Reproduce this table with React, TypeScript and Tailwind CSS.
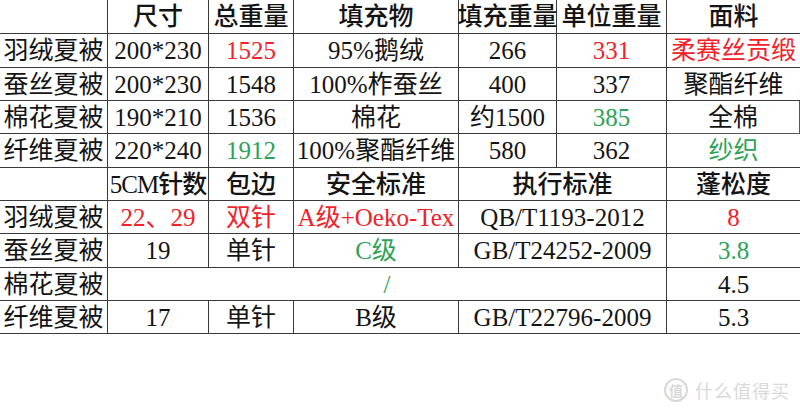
import React from "react";

type Cell = {
  text: string;
  color?: "red" | "green";
  bold?: boolean;
  span?: string;
  last?: boolean;
  extra?: string;
};

const colorClass = (c?: "red" | "green") =>
  c === "red" ? "text-[#f0222a]" : c === "green" ? "text-[#2ea356]" : "text-[#141414]";

const sizeRows: Cell[][] = [
  [
    { text: "" },
    { text: "尺寸", bold: true },
    { text: "总重量", bold: true },
    { text: "填充物", bold: true },
    { text: "填充重量", bold: true },
    { text: "单位重量", bold: true },
    { text: "面料", bold: true, last: true },
  ],
  [
    { text: "羽绒夏被" },
    { text: "200*230" },
    { text: "1525", color: "red" },
    { text: "95%鹅绒" },
    { text: "266" },
    { text: "331", color: "red" },
    { text: "柔赛丝贡缎", color: "red", last: true },
  ],
  [
    { text: "蚕丝夏被" },
    { text: "200*230" },
    { text: "1548" },
    { text: "100%柞蚕丝" },
    { text: "400" },
    { text: "337" },
    { text: "聚酯纤维", last: true },
  ],
  [
    { text: "棉花夏被" },
    { text: "190*210" },
    { text: "1536" },
    { text: "棉花" },
    { text: "约1500" },
    { text: "385", color: "green" },
    { text: "全棉", last: true, extra: "border-r border-[#555]" },
  ],
  [
    { text: "纤维夏被" },
    { text: "220*240" },
    { text: "1912", color: "green" },
    { text: "100%聚酯纤维" },
    { text: "580" },
    { text: "362" },
    { text: "纱织", color: "green", last: true },
  ],
];

const specRows: Cell[][] = [
  [
    { text: "" },
    { text: "5CM针数", bold: true, extra: "tracking-[-1px]" },
    { text: "包边", bold: true },
    { text: "安全标准", bold: true },
    { text: "执行标准", bold: true, span: "col-span-2" },
    { text: "蓬松度", bold: true, last: true },
  ],
  [
    { text: "羽绒夏被" },
    { text: "22、29", color: "red" },
    { text: "双针", color: "red" },
    { text: "A级+Oeko-Tex", color: "red" },
    { text: "QB/T1193-2012", span: "col-span-2" },
    { text: "8", color: "red", last: true },
  ],
  [
    { text: "蚕丝夏被" },
    { text: "19" },
    { text: "单针" },
    { text: "C级", color: "green" },
    { text: "GB/T24252-2009", span: "col-span-2" },
    { text: "3.8", color: "green", last: true },
  ],
  [
    { text: "棉花夏被" },
    { text: "/", color: "green", span: "col-span-5" },
    { text: "4.5", last: true },
  ],
  [
    { text: "纤维夏被" },
    { text: "17" },
    { text: "单针" },
    { text: "B级" },
    { text: "GB/T22796-2009", span: "col-span-2" },
    { text: "5.3", last: true },
  ],
];

const TableBlock: React.FC<{ rows: Cell[][]; rowsClass: string }> = ({ rows, rowsClass }) => (
  <div className={`grid grid-cols-[108px_101px_85px_165px_98px_110px_133px] ${rowsClass}`}>
    {rows.map((row, ri) =>
      row.map((cell, ci) => (
        <div
          key={`${ri}-${ci}`}
          className={`flex items-center justify-center whitespace-nowrap border-b border-[#3a3a3a] leading-none ${
            cell.last ? "" : "border-r"
          } ${cell.span ?? ""} ${cell.bold ? "font-medium" : "font-normal"} ${colorClass(cell.color)} ${
            cell.extra ?? ""
          }`}
        >
          {cell.text}
        </div>
      ))
    )}
  </div>
);

export default function App() {
  return (
    <div
      className="relative w-[800px] h-[412px] overflow-hidden bg-white text-[25px]"
      style={{ fontFamily: '"Liberation Serif", "Noto Sans CJK SC", serif' }}
    >
      <TableBlock rows={sizeRows} rowsClass="grid-rows-[34px_34px_33px_33px_34px]" />
      <TableBlock rows={specRows} rowsClass="grid-rows-[33px_33px_34px_33px_33px]" />

      {/* watermark */}
      <div
        className="absolute right-[10px] bottom-[10px] flex items-center gap-[7px] text-[#d9d9d9]"
        style={{ fontFamily: '"Noto Sans CJK SC", sans-serif' }}
      >
        <span className="flex h-[24px] w-[24px] items-center justify-center rounded-full border-2 border-[#d9d9d9] text-[14px] font-bold leading-none">
          值
        </span>
        <span className="text-[18px] leading-none tracking-[1px]">什么值得买</span>
      </div>
    </div>
  );
}
